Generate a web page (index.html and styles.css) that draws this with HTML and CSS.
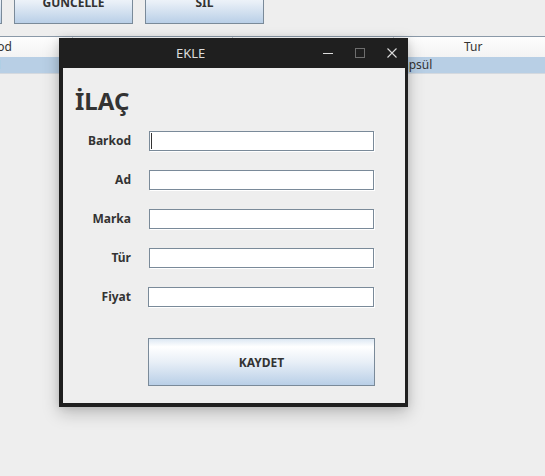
FILE: index.html
```html
<!DOCTYPE html>
<html lang="tr">
<head>
<meta charset="utf-8">
<title>EKLE</title>
<link rel="stylesheet" href="styles.css">
</head>
<body>
<div class="app">
  <div class="toolbar">
    <button class="btn tbtn">EKLE</button>
    <button class="btn tbtn">GÜNCELLE</button>
    <button class="btn tbtn">SIL</button>
  </div>
  <div class="table">
    <div class="thead">
      <div class="th">Barkod</div>
      <div class="th">Ad</div>
      <div class="th">Marka</div>
      <div class="th">Tur</div>
    </div>
    <div class="trow selected">
      <div class="td">8690000000001</div>
      <div class="td">Parol</div>
      <div class="td">Atabay</div>
      <div class="td">Kapsül</div>
    </div>
  </div>
</div>

<div class="dialog">
  <div class="titlebar">
    <span class="title">EKLE</span>
    <div class="controls">
      <svg class="ctl" width="10" height="10" viewBox="0 0 10 10"><line x1="0" y1="5.5" x2="10" y2="5.5" stroke="#dcdcdc" stroke-width="1"/></svg>
      <svg class="ctl" width="10" height="10" viewBox="0 0 10 10"><rect x="0.5" y="0.5" width="9" height="9" fill="none" stroke="#6e6e6e" stroke-width="1"/></svg>
      <svg class="ctl" width="10" height="10" viewBox="0 0 10 10"><path d="M0.5 0.5 L9.5 9.5 M9.5 0.5 L0.5 9.5" stroke="#dcdcdc" stroke-width="1.1" fill="none"/></svg>
    </div>
  </div>
  <div class="content">
    <h1 class="heading">İLAÇ</h1>
    <div class="form">
      <div class="label">Barkod</div>
      <div class="field"><span class="caret"></span></div>
      <div class="label">Ad</div>
      <div class="field"></div>
      <div class="label">Marka</div>
      <div class="field"></div>
      <div class="label">Tür</div>
      <div class="field"></div>
      <div class="label">Fiyat</div>
      <div class="field field-wide"></div>
      <button class="btn save">KAYDET</button>
    </div>
  </div>
</div>
</body>
</html>
```

FILE: styles.css
```css
* { box-sizing: border-box; }

html, body {
  margin: 0;
  padding: 0;
  width: 545px;
  height: 476px;
  overflow: hidden;
  background: #eeeeee;
  font-family: "Noto Sans", "DejaVu Sans", sans-serif;
  color: #333333;
}

.app {
  position: relative;
}

.btn {
  font-family: "Noto Sans", "DejaVu Sans", sans-serif;
  font-weight: bold;
  font-size: 12px;
  color: #333333;
  border: 1px solid #7a8a99;
  border-radius: 0;
  padding: 0;
  background: linear-gradient(to bottom, #dde8f3 0%, #ffffff 17%, #e8eff7 50%, #b9cfe7 100%);
  cursor: default;
}

.toolbar {
  display: flex;
  gap: 12px;
  margin-top: -19px;
  margin-left: -117px;
  height: 43px;
}

.tbtn {
  width: 119px;
  height: 43px;
  flex: none;
}

.table {
  margin-top: 12px;
  margin-left: -88px;
  width: 642px;
  font-size: 12px;
}

.thead {
  display: flex;
  height: 21px;
  border-top: 1px solid #8a99a8;
  background: linear-gradient(to bottom, #fdfdfd, #f3f3f3);
}

.th {
  width: 160.5px;
  flex: none;
  text-align: center;
  line-height: 20px;
  border-right: 1px solid #c9cfd6;
  color: #333333;
}

.trow {
  display: flex;
  height: 17px;
  border-bottom: 1px solid #d4d9df;
}

.trow.selected {
  background: #b8cfe5;
}

.td {
  width: 160.5px;
  flex: none;
  padding-left: 1px;
  line-height: 16px;
  color: #333333;
  white-space: nowrap;
  overflow: hidden;
}

.dialog {
  position: absolute;
  left: 59px;
  top: 38px;
  width: 349px;
  height: 369px;
  background: #1f1f1f;
  box-shadow: 0 6px 16px rgba(0, 0, 0, 0.22), 0 0 8px rgba(0, 0, 0, 0.10);
  display: flex;
  flex-direction: column;
}

.titlebar {
  height: 30px;
  display: flex;
  align-items: center;
  flex: none;
}

.title {
  padding-left: 117px;
  font-size: 13px;
  color: #dcdcdc;
  flex: 1;
}

.controls {
  display: flex;
  gap: 22px;
  margin-right: 11px;
  align-items: center;
}

.ctl {
  display: block;
}

.content {
  flex: 1;
  margin: 0 3px 4px 4px;
  background: #eeeeee;
  padding-top: 16px;
}

.heading {
  margin: 0 0 0 12px;
  font-size: 24px;
  line-height: 33px;
  font-weight: bold;
  color: #333333;
}

.form {
  margin-top: 14px;
  display: grid;
  grid-template-columns: 68px 225px;
  column-gap: 18px;
  row-gap: 19px;
}

.label {
  font-size: 12px;
  font-weight: bold;
  text-align: right;
  line-height: 20px;
  height: 20px;
  color: #333333;
}

.field {
  position: relative;
  height: 20px;
  background: #ffffff;
  border: 1px solid #7a8a99;
  box-shadow: 1px 1px 0 #ffffff;
}

.field-wide {
  width: 226px;
  margin-left: -1px;
}

.caret {
  position: absolute;
  left: 1px;
  top: 1px;
  width: 1px;
  height: 16px;
  background: #333333;
}

.save {
  grid-column: 2;
  width: 227px;
  height: 48px;
  margin-left: -1px;
  margin-top: 12px;
}
```
